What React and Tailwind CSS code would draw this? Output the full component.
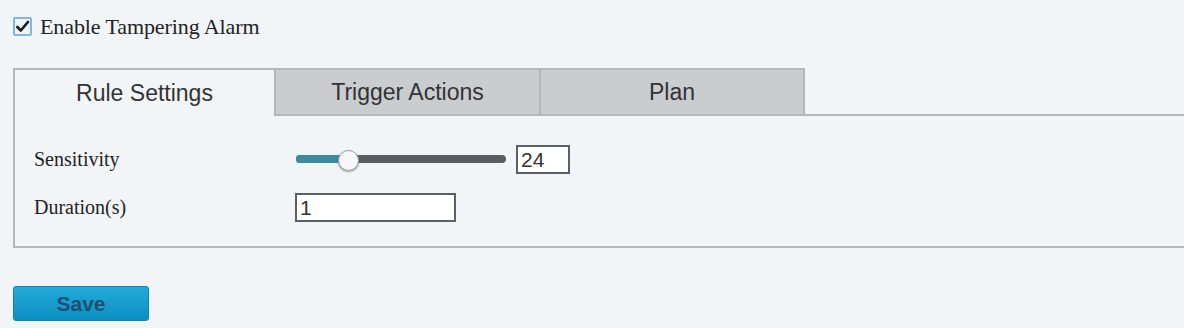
import React from "react";

function Check() {
  return (
    <div className="w-[19px] h-[19px] border-2 border-[#86b6d8] bg-[#eef5fa] flex items-center justify-center rounded-[2px]">
      <svg width="15" height="15" viewBox="0 0 16 16">
        <path d="M2.5 8.5 L6.2 12.3 L13.8 3.2" fill="none" stroke="#1d1d1d" strokeWidth="2.8" strokeLinecap="round" strokeLinejoin="round" />
      </svg>
    </div>
  );
}

export default function App() {
  const serif = { fontFamily: '"Liberation Serif", "Times New Roman", serif' };
  const sans = { fontFamily: '"Liberation Sans", Arial, sans-serif' };
  return (
    <div className="w-[1184px] h-[328px] bg-[#f2f5f8] overflow-hidden pl-[13px]">
      <div className="pt-[17px] flex items-center gap-[8px] h-[36px]">
        <Check />
        <span style={serif} className="text-[22px] leading-none text-[#222] tracking-[-0.1px]">Enable Tampering Alarm</span>
      </div>
      <div className="mt-[32px] flex h-[48px]" style={sans}>
        <div className="w-[263px] border-t-2 border-l-2 border-r-2 border-[#b3b7ba] bg-[#f2f5f8] flex items-center justify-center text-[23px] text-[#333]">Rule Settings</div>
        <div className="w-[265px] border-t-2 border-r-2 border-b-2 border-[#b3b7ba] bg-[#c9cdd0] flex items-center justify-center text-[23px] text-[#333]">Trigger Actions</div>
        <div className="w-[264px] border-t-2 border-r-2 border-b-2 border-[#b3b7ba] bg-[#c9cdd0] flex items-center justify-center text-[23px] text-[#333]">Plan</div>
        <div className="flex-1 border-b-2 border-[#b3b7ba]"></div>
      </div>
      <div className="w-[1174px] h-[132px] border-l-2 border-r-2 border-b-2 border-[#b3b7ba] pl-[19px] pt-[28px]">
        <div className="flex items-center h-[30px]">
          <span style={serif} className="w-[262px] text-[20px] text-[#222]">Sensitivity</span>
          <div className="relative w-[210px] h-[30px] flex items-center">
            <div className="w-full h-[8px] rounded-full bg-[#585e64] overflow-hidden">
              <div className="w-[52px] h-full bg-[#3b8aa2]"></div>
            </div>
            <div className="absolute left-[42px] top-[6px] w-[21px] h-[21px] rounded-full bg-[#f4f6f8] border border-[#9aa0a5] shadow-[0_1px_2px_rgba(0,0,0,0.35)]"></div>
          </div>
          <div style={sans} className="ml-[10px] w-[54px] h-[29px] border-2 border-[#5c6064] bg-white text-[21px] leading-none text-[#333] pl-[3px] flex items-center">24</div>
        </div>
        <div className="flex items-center h-[30px] mt-[18px]">
          <span style={serif} className="w-[261px] text-[20px] text-[#222]">Duration(s)</span>
          <div style={sans} className="w-[161px] h-[29px] border-2 border-[#5c6064] bg-white text-[21px] leading-none text-[#333] pl-[3px] flex items-center">1</div>
        </div>
      </div>
      <div className="mt-[38px]">
        <div style={sans} className="w-[136px] h-[35px] rounded-[3px] bg-gradient-to-b from-[#22abd9] to-[#0b8fc2] border border-[#0c86b6] flex items-center justify-center text-[21px] font-bold text-[#1d4f73]">Save</div>
      </div>
    </div>
  );
}
